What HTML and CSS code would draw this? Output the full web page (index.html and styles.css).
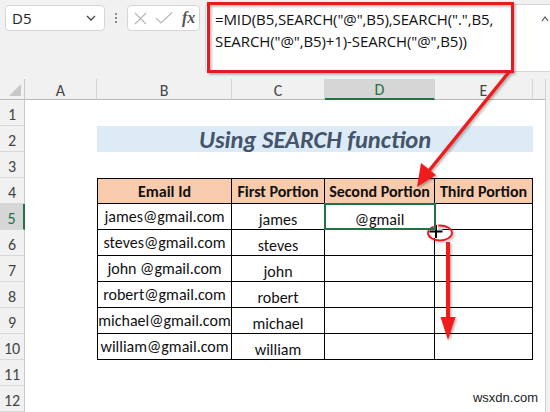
FILE: index.html
```html
<!DOCTYPE html>
<html>
<head>
<meta charset="utf-8">
<link rel="stylesheet" href="styles.css">
</head>
<body>
<div class="app">
  <div class="toolbar">
    <div class="namebox">
      <span class="ref">D5</span>
      <svg class="chev" width="10" height="6" viewBox="0 0 10 6"><path d="M1 1 L5 5 L9 1" fill="none" stroke="#444" stroke-width="1.3"/></svg>
    </div>
    <div class="dots"><i></i><i></i><i></i></div>
    <div class="fxbox">
      <svg width="13" height="13" viewBox="0 0 13 13"><path d="M1 1 L12 12 M12 1 L1 12" stroke="#b5b5b5" stroke-width="1.1" fill="none"/></svg>
      <svg width="18" height="14" viewBox="0 0 18 14"><path d="M1 7 L6 12 L17 1.5" stroke="#b5b5b5" stroke-width="1.1" fill="none"/></svg>
      <span class="fx">fx</span>
    </div>
    <div class="formula">
      <div class="ftext">=MID(B5,SEARCH("@",B5),SEARCH(".",B5,<br>SEARCH("@",B5)+1)-SEARCH("@",B5))</div>
      <svg class="collapse" width="8" height="6" viewBox="0 0 8 6"><path d="M1 5 L4 1 L7 5" fill="none" stroke="#555" stroke-width="1.2"/></svg>
    </div>
  </div>

  <div class="sheet">
    <div class="body"></div>
    <div class="corner"><svg width="12" height="12" viewBox="0 0 12 12"><path d="M12 0 L12 12 L0 12 Z" fill="#c8c8c8"/></svg></div>
    <div class="colhdr">A</div>
    <div class="colhdr">B</div>
    <div class="colhdr">C</div>
    <div class="colhdr active">D</div>
    <div class="colhdr">E</div>
    <div class="colhdr last"></div>
    <div class="strip"></div>

    <div class="rowhdr r1">1</div>
    <div class="rowhdr r2">2</div>
    <div class="rowhdr r3">3</div>
    <div class="rowhdr r4">4</div>
    <div class="rowhdr r5 active">5</div>
    <div class="rowhdr r6">6</div>
    <div class="rowhdr r7">7</div>
    <div class="rowhdr r8">8</div>
    <div class="rowhdr r9">9</div>
    <div class="rowhdr r10">10</div>
    <div class="rowhdr r11">11</div>
    <div class="rowhdr r12">12</div>

    <div class="title">Using SEARCH function</div>

    <div class="table">
      <div class="th">Email Id</div>
      <div class="th">First Portion</div>
      <div class="th">Second Portion</div>
      <div class="th">Third Portion</div>

      <div class="td em">james@gmail.com</div><div class="td lo">james</div><div class="td lo">@gmail</div><div class="td"></div>
      <div class="td em">steves@gmail.com</div><div class="td lo">steves</div><div class="td"></div><div class="td"></div>
      <div class="td em">john @gmail.com</div><div class="td lo">john</div><div class="td"></div><div class="td"></div>
      <div class="td em">robert@gmail.com</div><div class="td lo">robert</div><div class="td"></div><div class="td"></div>
      <div class="td em">michael@gmail.com</div><div class="td lo">michael</div><div class="td"></div><div class="td"></div>
      <div class="td em">william@gmail.com</div><div class="td lo">william</div><div class="td"></div><div class="td"></div>
    </div>

    <div class="selection"></div>
  </div>

  <svg class="overlay" width="550" height="412" viewBox="0 0 550 412">
    <defs>
      <filter id="sh" x="-20%" y="-20%" width="140%" height="140%">
        <feDropShadow dx="1.5" dy="1.5" stdDeviation="1" flood-color="#000" flood-opacity="0.3"/>
      </filter>
    </defs>
    <rect x="208.5" y="3.5" width="304" height="68" fill="none" stroke="#e31b23" stroke-width="3" filter="url(#sh)"/>
    <g filter="url(#sh)">
      <line x1="509" y1="72" x2="428" y2="172" stroke="#ee1c1c" stroke-width="3.5"/>
      <path d="M417 187 L421 163 L436 175 Z" fill="#ee1c1c"/>
    </g>
    <ellipse cx="440" cy="233" rx="12" ry="7.5" fill="none" stroke="#e31b23" stroke-width="1.8" filter="url(#sh)"/>
    <path d="M436 225 V238 M429.5 231.5 H442.5" stroke="#fff" stroke-width="4.5"/>
    <path d="M436 225 V238 M429.5 231.5 H442.5" stroke="#000" stroke-width="2"/>
    <g filter="url(#sh)">
      <line x1="448" y1="242" x2="448" y2="320" stroke="#ee1c1c" stroke-width="4"/>
      <path d="M440.5 317 L455.5 317 L448 340 Z" fill="#ee1c1c"/>
    </g>
  </svg>

  <div class="watermark">wsxdn.com</div>
</div>
</body>
</html>
```

FILE: styles.css
```css
* { box-sizing: border-box; }
html, body { margin: 0; padding: 0; }
body {
  width: 550px;
  height: 412px;
  overflow: hidden;
  background: #f1f1f1;
  font-family: "Carlito", "Lato", "Open Sans", sans-serif;
}
.app {
  position: relative;
  width: 550px;
  height: 412px;
}

/* toolbar */
.toolbar {
  height: 79px;
  display: flex;
  align-items: flex-start;
  padding: 4px 0 0 5px;
}
.namebox {
  width: 100px;
  height: 26px;
  margin-top: 1px;
  background: #fff;
  border: 1px solid #d6d6d6;
  border-radius: 4px;
  display: flex;
  align-items: center;
  justify-content: space-between;
  padding: 0 8px 0 6px;
  font-family: "Open Sans", "DejaVu Sans", sans-serif;
  font-size: 15px;
  color: #222;
}
.dots {
  width: 22px;
  height: 27px;
  display: flex;
  flex-direction: column;
  align-items: center;
  justify-content: center;
  gap: 2px;
}
.dots i {
  width: 2px;
  height: 2px;
  background: #888;
}
.fxbox {
  width: 73px;
  height: 26px;
  margin-top: 1px;
  background: #fff;
  border: 1px solid #d6d6d6;
  border-radius: 4px;
  display: flex;
  align-items: center;
  gap: 8px;
  padding-left: 6px;
}
.fx {
  font-family: "Liberation Serif", "DejaVu Serif", serif;
  font-style: italic;
  font-weight: bold;
  font-size: 16px;
  color: #555;
  margin-left: 1px;
}
.formula {
  flex: 1;
  margin-left: 5px;
  height: 68px;
  background: #fff;
  border: 1px solid #d6d6d6;
  border-right: none;
  border-radius: 3px 0 0 3px;
  display: flex;
  justify-content: space-between;
  padding: 3px 0 0 9px;
}
.ftext {
  font-family: "Open Sans", "DejaVu Sans", sans-serif;
  font-size: 15px;
  line-height: 22px;
  color: #111;
  letter-spacing: -0.1px;
}
.collapse {
  margin: 8px 1px 0 0;
  flex: none;
}

/* sheet */
.sheet {
  display: grid;
  grid-template-columns: 25px 72px 135px 93px 110px 98px 12px 1fr;
  grid-template-rows: 21px repeat(12, 26px);
  height: 333px;
}
.body {
  grid-column: 2 / 8;
  grid-row: 2 / 14;
  background: #fff;
}
.corner {
  grid-column: 1;
  grid-row: 1;
  border-right: 1px solid #c8c8c8;
  border-bottom: 1px solid #b8b8b8;
  display: flex;
  align-items: flex-end;
  justify-content: flex-end;
  padding: 0 3px 3px 0;
}
.colhdr {
  grid-row: 1;
  border-right: 1px solid #d4d4d4;
  border-bottom: 1px solid #b8b8b8;
  display: flex;
  align-items: center;
  justify-content: center;
  font-size: 16px;
  color: #444;
  padding-top: 2px;
}
.colhdr.active {
  background: #d6d6d6;
  border-bottom: 2px solid #217346;
  color: #217346;
}
.colhdr.last { border-right: none; }
.strip {
  grid-column: 8;
  grid-row: 1 / 14;
  border-left: 1px solid #d0d0d0;
  background: #f1f1f1;
}
.rowhdr {
  grid-column: 1;
  border-right: 1px solid #c8c8c8;
  border-bottom: 1px solid #d8d8d8;
  display: flex;
  align-items: center;
  justify-content: center;
  font-size: 16px;
  color: #444;
  padding-top: 3px;
}
.rowhdr.active {
  background: #d6d6d6;
  border-right: 2px solid #217346;
  color: #217346;
}
.r1 { grid-row: 2; } .r2 { grid-row: 3; } .r3 { grid-row: 4; }
.r4 { grid-row: 5; } .r5 { grid-row: 6; } .r6 { grid-row: 7; }
.r7 { grid-row: 8; } .r8 { grid-row: 9; } .r9 { grid-row: 10; }
.r10 { grid-row: 11; } .r11 { grid-row: 12; } .r12 { grid-row: 13; }

.title {
  grid-column: 3 / 7;
  grid-row: 3;
  background: #ddebf7;
  display: flex;
  align-items: center;
  justify-content: center;
  font-weight: bold;
  font-style: italic;
  font-size: 24.5px;
  color: #44546a;
  padding-top: 1px;
}

.table {
  grid-column: 3 / 7;
  grid-row: 5 / 12;
  display: grid;
  grid-template-columns: 134px 93px 110px 98px;
  grid-template-rows: 25px repeat(6, 26px);
  border-left: 1px solid #000;
  border-top: 1px solid #000;
  width: 436px;
}
.th, .td {
  border-right: 1px solid #000;
  border-bottom: 1px solid #000;
  display: flex;
  justify-content: center;
  font-size: 16px;
  color: #111;
}
.th {
  background: #f8cbad;
  font-weight: bold;
  align-items: center;
  padding-top: 1px;
  white-space: nowrap;
}
.td { background: #fff; }
.td.em { align-items: center; }
.td.lo { align-items: flex-end; padding-bottom: 0; }

.selection {
  grid-column: 5;
  grid-row: 6;
  margin: -1px -1px 0 -1px;
  border: 2px solid #217346;
  z-index: 2;
}

.overlay {
  position: absolute;
  left: 0;
  top: 0;
  pointer-events: none;
}
.watermark {
  position: absolute;
  right: 12px;
  bottom: 7px;
  font-family: "Liberation Sans", Arial, sans-serif;
  font-size: 13px;
  color: #222;
}
```
